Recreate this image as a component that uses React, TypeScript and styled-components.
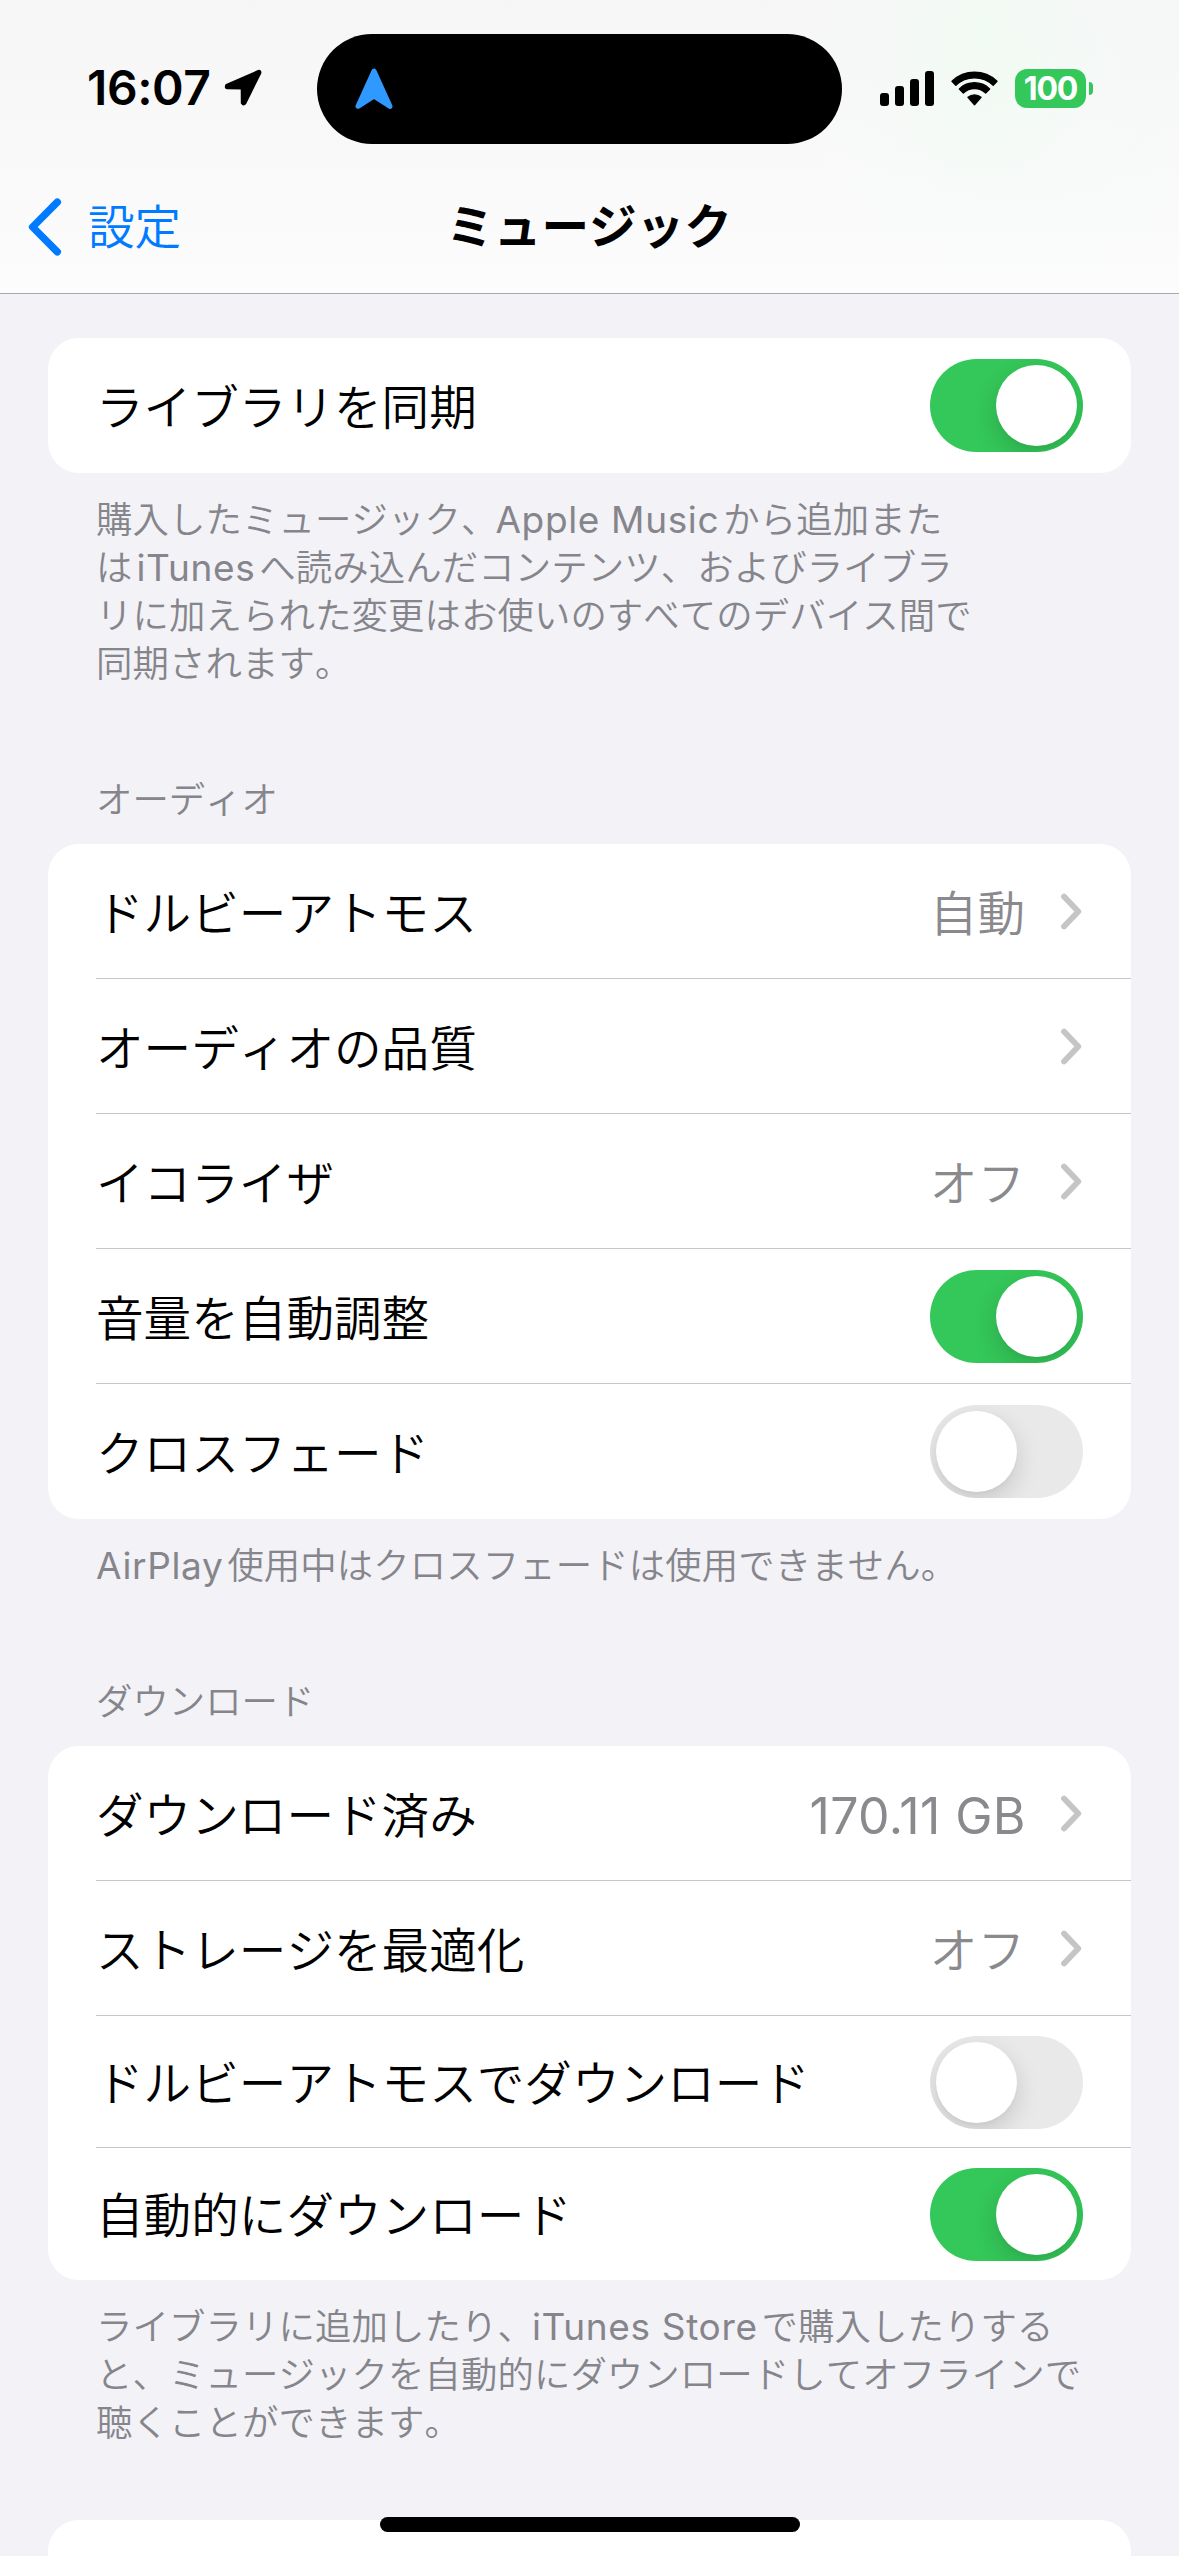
import React from "react";
import styled, { createGlobalStyle } from "styled-components";

const JP = `"Noto Sans CJK JP", "Noto Sans", sans-serif`;
const LATIN = `Inter, "Noto Sans CJK JP", sans-serif`;

const GlobalStyle = createGlobalStyle`
  html, body { margin: 0; padding: 0; background: #f2f2f7; }
  *, *::before, *::after { box-sizing: border-box; }
`;

const Screen = styled.div`
  position: relative;
  width: 1179px;
  height: 2556px;
  overflow: hidden;
  display: flex;
  flex-direction: column;
  background: #f2f2f7;
  color: #000;
  font-family: ${JP};
  font-size: 47.6px;
  font-weight: 350;
  font-kerning: none;
  white-space: nowrap;
`;

const Header = styled.header`
  display: flex;
  flex-direction: column;
  flex: none;
  height: 294px;
  border-bottom: 1px solid #a9a9ad;
  background:
    radial-gradient(ellipse 110px 170px at 980px 40px, rgba(238, 252, 240, 0.5), rgba(242, 252, 245, 0) 100%),
    radial-gradient(ellipse 260px 240px at 1020px 60px, rgba(243, 251, 246, 0.6), rgba(248, 252, 250, 0) 100%),
    linear-gradient(#f6f6f6, #f9f9f9 55%, #fcfcfd);
`;

const StatusBar = styled.div`
  display: grid;
  grid-template-columns: 317px 525px 1fr;
  align-items: center;
  height: 176px;
`;

const TimeGroup = styled.div`
  display: flex;
  align-items: center;
  gap: 15px;
  padding-left: 87px;

  svg { margin-bottom: 1px; }
`;

const Time = styled.span`
  width: 122px;
  font-family: ${LATIN};
  font-size: 48px;
  line-height: 60px;
  font-weight: 600;
  letter-spacing: -0.4px;
`;

const Island = styled.div`
  display: flex;
  align-items: center;
  height: 110px;
  margin-top: 2px;
  padding-left: 38px;
  border-radius: 55px;
  background: #000;
`;

const StatusIcons = styled.div`
  display: flex;
  align-items: center;
  padding-left: 38px;
`;

const SignalBars = styled.div`
  display: flex;
  align-items: flex-end;
  gap: 6px;
  height: 35px;
  margin-right: 17px;
`;

const SignalBar = styled.i<{ $h: number }>`
  width: 9px;
  height: ${(p) => p.$h}px;
  border-radius: 3px;
  background: #000;
`;

const Battery = styled.div`
  display: flex;
  align-items: center;
  gap: 3px;
  margin-left: 17px;
`;

const BatteryBody = styled.div`
  display: flex;
  align-items: center;
  justify-content: center;
  width: 71px;
  height: 39px;
  border-radius: 12px;
  background: #34c759;
  color: #fff;
  font-family: ${LATIN};
  font-size: 32px;
  line-height: 39px;
  font-weight: 700;
  letter-spacing: -1.2px;
`;

const BatteryNub = styled.i`
  width: 4px;
  height: 13px;
  border-radius: 0 5px 5px 0;
  background: #34c759;
`;

const NavBar = styled.nav`
  display: grid;
  grid-template-columns: 1fr auto 1fr;
  align-items: center;
  height: 102px;
`;

const Back = styled.a`
  display: flex;
  align-items: center;
  gap: 26px;
  padding-left: 28px;
  color: #007aff;
  font-size: 46.6px;
  line-height: 60px;
`;

const BackLabel = styled.span`
  margin-bottom: 6px;
`;

const Title = styled.h1`
  margin: 0 1px 7px 0;
  font-size: 47.6px;
  line-height: 60px;
  font-weight: 700;
`;

const Content = styled.main`
  display: flex;
  flex-direction: column;
  padding: 44px 48px 0;
`;

const Section = styled.section<{ $after: number }>`
  display: flex;
  flex-direction: column;
  margin-bottom: ${(p) => p.$after}px;
`;

const Caption = styled.h2`
  margin: 0 0 23px;
  padding-left: 48px;
  color: #85858b;
  font-size: 36.4px;
  line-height: 48px;
  font-weight: 350;
`;

const Note = styled.p`
  margin: 20px 0 0;
  padding-left: 48px;
  color: #85858b;
  font-size: 36.4px;
  line-height: 48px;
  letter-spacing: 0.1px;
`;

const Latin = styled.span<{ $lead?: number; $trail?: number }>`
  margin-left: ${(p) => p.$lead ?? 0}px;
  margin-right: ${(p) => p.$trail ?? 0}px;
  font-family: ${LATIN};
  font-size: 37px;
  font-weight: 400;
  font-kerning: normal;
  letter-spacing: 0.65px;
  line-height: 1;
`;

const Card = styled.div`
  display: flex;
  flex-direction: column;
  min-height: 135px;
  border-radius: 31px;
  background: #fff;
`;

const RowBox = styled.div<{ $h: number }>`
  display: flex;
  height: ${(p) => p.$h}px;
  padding-left: 48px;
`;

const RowInner = styled.div<{ $line: boolean }>`
  display: flex;
  align-items: center;
  flex: 1;
  padding-right: 48px;
  box-shadow: ${(p) => (p.$line ? "inset 0 -1px 0 #c6c6c8" : "none")};
`;

const Label = styled.span<{ $compact: boolean }>`
  flex: 1;
  padding-bottom: ${(p) => (p.$compact ? 3 : 1)}px;
  line-height: 60px;
`;

const Value = styled.span<{ $latin: boolean }>`
  margin-right: ${(p) => (p.$latin ? 34 : 35)}px;
  padding-bottom: 1px;
  color: #8a8a8e;
  line-height: 60px;
  ${(p) =>
    p.$latin &&
    `font-family: ${LATIN}; font-size: 50px; font-weight: 400; letter-spacing: 0.4px; font-kerning: normal; padding-top: 5px;`}
`;

const ToggleTrack = styled.span<{ $on: boolean }>`
  display: flex;
  justify-content: ${(p) => (p.$on ? "flex-end" : "flex-start")};
  width: 153px;
  height: 93px;
  padding: 6px;
  border-radius: 47px;
  overflow: hidden;
  background: ${(p) => (p.$on ? "#34c759" : "#e9e9ea")};
`;

const ToggleThumb = styled.span`
  width: 81px;
  height: 81px;
  border-radius: 50%;
  background: #fff;
  box-shadow: 0 9px 24px rgba(0, 0, 0, 0.15), 0 3px 3px rgba(0, 0, 0, 0.02);
`;

const HomeIndicator = styled.div`
  position: absolute;
  left: 380px;
  bottom: 24px;
  width: 420px;
  height: 15px;
  border-radius: 8px;
  background: #000;
`;

const Toggle = ({ on }: { on: boolean }) => (
  <ToggleTrack $on={on} role="switch" aria-checked={on}>
    <ToggleThumb />
  </ToggleTrack>
);

const Disclosure = () => (
  <svg width="23" height="38" viewBox="0 0 23 38" fill="none">
    <path
      d="M4 3.5 L18.3 18.5 L4 33.5"
      stroke="#c5c5c7"
      strokeWidth="5.8"
      strokeLinecap="round"
      strokeLinejoin="round"
    />
  </svg>
);

const LocationArrow = () => (
  <svg width="38" height="37" viewBox="0 0 38 37">
    <path
      d="M34.5 2.4 L2.6 16.2 Q1.6 18.6 3.2 18.9 L17.6 19 Q18.1 19 18.1 19.6 L18.2 34 Q19.6 36 21 34.2 L36 3.8 Q36.2 1.8 34.5 2.4 Z"
      fill="#000"
      stroke="#000"
      strokeWidth="2.8"
      strokeLinejoin="round"
    />
  </svg>
);

const NavigationArrow = () => (
  <svg width="38" height="42" viewBox="0 0 38 42">
    <path
      d="M19 3 L3 38.3 L19 28.2 L35 38.3 Z"
      fill="#3099ff"
      stroke="#3099ff"
      strokeWidth="5"
      strokeLinejoin="round"
    />
  </svg>
);

const Wifi = () => (
  <svg width="47" height="35" viewBox="0 0 47 35">
    <path
      d="M1 10.3 A32.5 32.5 0 0 1 46 10.3 L42.2 14.2 A27 27 0 0 0 4.8 14.2 Z M8.4 18 A21.5 21.5 0 0 1 38.6 18 L34.7 22 A16 16 0 0 0 12.3 22 Z M17 26.3 A10 10 0 0 1 30 26.3 L23.5 33.8 Z"
      fill="#000"
      stroke="#000"
      strokeWidth="1.4"
      strokeLinejoin="round"
    />
  </svg>
);

const BackChevron = () => (
  <svg width="34" height="58" viewBox="0 0 34 58" fill="none">
    <path
      d="M29.3 4.2 L4.6 29 L29.3 53.8"
      stroke="#007aff"
      strokeWidth="7.4"
      strokeLinecap="round"
      strokeLinejoin="round"
    />
  </svg>
);

type RowProps = {
  label: string;
  value?: string;
  latin?: boolean;
  toggle?: boolean;
  height?: number;
  last?: boolean;
};

const Row = ({ label, value, latin = false, toggle, height = 135, last = false }: RowProps) => (
  <RowBox $h={height}>
    <RowInner $line={!last}>
      <Label $compact={height < 135}>{label}</Label>
      {value && <Value $latin={latin}>{value}</Value>}
      {toggle === undefined ? <Disclosure /> : <Toggle on={toggle} />}
    </RowInner>
  </RowBox>
);

export default function App() {
  return (
    <Screen lang="ja">
      <GlobalStyle />
      <Header>
        <StatusBar>
          <TimeGroup>
            <Time>16:07</Time>
            <LocationArrow />
          </TimeGroup>
          <Island>
            <NavigationArrow />
          </Island>
          <StatusIcons>
            <SignalBars>
              {[13, 20, 27, 35].map((h) => (
                <SignalBar key={h} $h={h} />
              ))}
            </SignalBars>
            <Wifi />
            <Battery>
              <BatteryBody>100</BatteryBody>
              <BatteryNub />
            </Battery>
          </StatusIcons>
        </StatusBar>
        <NavBar>
          <Back>
            <BackChevron />
            <BackLabel>設定</BackLabel>
          </Back>
          <Title>ミュージック</Title>
        </NavBar>
      </Header>
      <Content>
        <Section $after={88}>
          <Card>
            <Row label="ライブラリを同期" toggle last />
          </Card>
          <Note>
            購入したミュージック、<Latin $lead={-2} $trail={4}>Apple Music</Latin>から追加また
            <br />
            は<Latin $lead={4} $trail={4}>iTunes</Latin>へ読み込んだコンテンツ、およびライブラ
            <br />
            リに加えられた変更はお使いのすべてのデバイス間で
            <br />
            同期されます。
          </Note>
        </Section>
        <Section $after={88}>
          <Caption>オーディオ</Caption>
          <Card>
            <Row label="ドルビーアトモス" value="自動" />
            <Row label="オーディオの品質" />
            <Row label="イコライザ" value="オフ" />
            <Row label="音量を自動調整" toggle />
            <Row label="クロスフェード" toggle={false} last />
          </Card>
          <Note>
            <Latin $trail={4}>AirPlay</Latin>使用中はクロスフェードは使用できません。
          </Note>
        </Section>
        <Section $after={76}>
          <Caption>ダウンロード</Caption>
          <Card>
            <Row label="ダウンロード済み" value="170.11 GB" latin />
            <Row label="ストレージを最適化" value="オフ" />
            <Row label="ドルビーアトモスでダウンロード" toggle={false} height={132} />
            <Row label="自動的にダウンロード" toggle height={132} last />
          </Card>
          <Note>
            ライブラリに追加したり、<Latin $lead={-2} $trail={4}>iTunes Store</Latin>で購入したりする
            <br />
            と、ミュージックを自動的にダウンロードしてオフラインで
            <br />
            聴くことができます。
          </Note>
        </Section>
        <Card />
      </Content>
      <HomeIndicator />
    </Screen>
  );
}
